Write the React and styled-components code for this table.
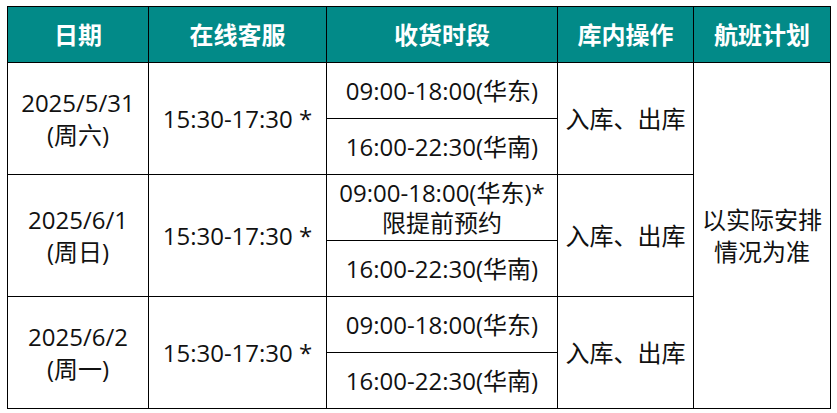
import React from 'react';
import styled, { createGlobalStyle } from 'styled-components';

const GlobalStyle = createGlobalStyle`
  body {
    margin: 0;
    background: #fff;
    font-family: "Open Sans", "Noto Sans CJK SC", sans-serif;
  }
`;

const Page = styled.div`
  padding: 6px 7px;
`;

const Table = styled.table`
  border-collapse: collapse;
  table-layout: fixed;
  width: 823px;
  font-size: 24px;
  line-height: 32px;
  color: #111;
  border: 1px solid #000;
`;

const Col = styled.col`
  width: ${p => p.$w}px;
`;

const Row = styled.tr`
  height: ${p => p.$h}px;
`;

const HeadCell = styled.th`
  background: #028a88;
  color: #fff;
  font-weight: 700;
  border: 1px solid #000;
  padding: 0;
  text-align: center;
  vertical-align: middle;
`;

const Cell = styled.td`
  border: 1px solid #000;
  padding: 0;
  text-align: center;
  vertical-align: middle;
  white-space: pre-line;
  line-height: ${p => p.$lh || 32}px;
`;

const columns = [
  { title: '日期', width: 141 },
  { title: '在线客服', width: 178 },
  { title: '收货时段', width: 231 },
  { title: '库内操作', width: 136 },
  { title: '航班计划', width: 137 },
];

const days = [
  {
    date: '2025/5/31\n(周六)',
    slots: ['09:00-18:00(华东)', '16:00-22:30(华南)'],
    heights: [56, 56],
  },
  {
    date: '2025/6/1\n(周日)',
    slots: ['09:00-18:00(华东)*\n限提前预约', '16:00-22:30(华南)'],
    heights: [66, 56],
  },
  {
    date: '2025/6/2\n(周一)',
    slots: ['09:00-18:00(华东)', '16:00-22:30(华南)'],
    heights: [56, 56],
  },
];

const App = () => {
  return (
    <Page>
      <GlobalStyle />
      <Table>
        <colgroup>
          {columns.map(col => (
            <Col key={col.title} $w={col.width} />
          ))}
        </colgroup>
        <thead>
          <Row $h={56}>
            {columns.map(col => (
              <HeadCell key={col.title}>{col.title}</HeadCell>
            ))}
          </Row>
        </thead>
        <tbody>
          {days.map((day, i) => (
            <React.Fragment key={day.date}>
              <Row $h={day.heights[0]}>
                <Cell rowSpan={2}>{day.date}</Cell>
                <Cell rowSpan={2}>15:30-17:30 *</Cell>
                <Cell $lh={30}>{day.slots[0]}</Cell>
                <Cell rowSpan={2}>入库、出库</Cell>
                {i === 0 && <Cell rowSpan={6}>{'以实际安排\n情况为准'}</Cell>}
              </Row>
              <Row $h={day.heights[1]}>
                <Cell>{day.slots[1]}</Cell>
              </Row>
            </React.Fragment>
          ))}
        </tbody>
      </Table>
    </Page>
  );
};

export default App;
